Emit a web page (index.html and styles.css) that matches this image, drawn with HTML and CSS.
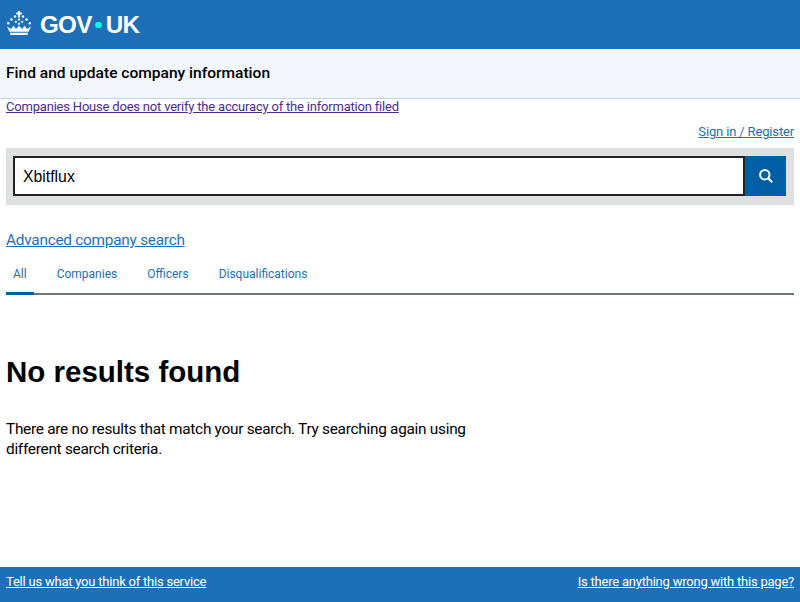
FILE: index.html
```html
<!DOCTYPE html>
<html lang="en">
<head>
<meta charset="utf-8">
<title>No results found - Find and update company information</title>
<link rel="stylesheet" href="styles.css">
</head>
<body>
<div class="page">
<header class="topbar">
  <svg class="crown" viewBox="0 0 26 24" aria-hidden="true">
    <g fill="#fff">
      <path d="M12 0h2v1.600h1.800v1.800H14v3h-2v-3h-1.800V1.600H12z"/>
      <circle cx="9" cy="5.500" r="1.200"/><circle cx="17" cy="5.500" r="1.200"/>
      <circle cx="5.500" cy="8.500" r="1.200"/><circle cx="20.500" cy="8.500" r="1.200"/>
      <circle cx="2.200" cy="12.200" r="1.200"/><circle cx="23.800" cy="12.200" r="1.200"/>
      <circle cx="13" cy="8.600" r="1.100"/><circle cx="9.800" cy="10.800" r="1.100"/><circle cx="16.200" cy="10.800" r="1.100"/>
      <circle cx="13" cy="12.800" r="1.100"/>
      <path d="M1 15.500 L5 18 L7.500 14.800 L10 18 L13 14.800 L16 18 L18.500 14.800 L21 18 L25 15.500 L22.500 20.800 H3.500 Z"/>
      <path d="M4 21.800h18l-.6 2.200H4.600z"/>
    </g>
  </svg>
  <span class="wordmark">GOV<span class="dot"></span>UK</span>
</header>
<div class="service"><span class="service-name">Find and update company information</span></div>
<main class="content">
  <a class="notice" href="#">Companies House does not verify the accuracy of the information filed</a>
  <div class="signin"><a class="link" href="#">Sign in / Register</a></div>
  <form class="search">
    <div class="search-box">Xbitflux</div>
    <div class="search-btn">
      <svg viewBox="0 0 14 14" class="mag" aria-hidden="true"><circle cx="5.800" cy="5.800" r="4.700" fill="none" stroke="#fff" stroke-width="2"/><path d="M9.200 9.200l4 4" stroke="#fff" stroke-width="2.200" fill="none"/></svg>
    </div>
  </form>
  <a class="link advanced" href="#">Advanced company search</a>
  <nav class="tabs">
    <a class="tab active" href="#">All</a>
    <a class="tab" href="#">Companies</a>
    <a class="tab" href="#">Officers</a>
    <a class="tab" href="#">Disqualifications</a>
  </nav>
  <h1 class="title">No results found</h1>
  <p class="message">There are no results that match your search. Try searching again using different search criteria.</p>
</main>
<footer class="footer">
  <a href="#">Tell us what you think of this service</a>
  <a href="#">Is there anything wrong with this page?</a>
</footer>
</div>
</body>
</html>
```
FILE: styles.css
```css
* { box-sizing: border-box; }
html, body { margin: 0; padding: 0; height: 100%; }
body { font-family: Roboto, "Liberation Sans", sans-serif; color: #000; background: #fff; overflow: hidden; }
.page { display: flex; flex-direction: column; height: 602px; }
.topbar { height: 49px; background: #1d70b8; display: flex; align-items: center; padding-left: 6px; flex: none; }
.crown { width: 26px; height: 24px; display: block; margin-bottom: 4px; }
.wordmark { font-family: "Liberation Sans", sans-serif; font-weight: 700; font-size: 24.200px; letter-spacing: -0.7px; color: #fff; margin-left: 8px; display: flex; align-items: center; }
.dot { width: 6.500px; height: 6.500px; border-radius: 50%; background: #00ffe0; margin: 1px 4px 0 3.500px; }
.service { height: 50px; background: #f3f7fb; border-bottom: 1px solid #bcd4e8; padding: 0 6px 2px; display: flex; align-items: center; flex: none; }
.service-name { font-size: 15.550px; font-weight: 500; }
.content { flex: 1; padding: 0 6px; display: flex; flex-direction: column; align-items: flex-start; }
.notice { font-size: 13px; letter-spacing: -0.2px; line-height: 15px; color: #4c2c92; }
.link { color: #1d70b8; }
.signin { align-self: stretch; text-align: right; font-size: 13px; letter-spacing: -0.15px; line-height: 17px; margin-top: 9px; }
.search { align-self: stretch; height: 57px; margin-top: 7.500px; background: #dee0e2; padding: 8.500px 8px 8px 7px; display: flex; }
.search-box { flex: 1; height: 40px; border: 2px solid #222; background: #fff; font-family: "Liberation Sans", sans-serif; font-size: 15.800px; line-height: 37px; padding-left: 8px; }
.search-btn { width: 41px; height: 40px; background: #005ea5; display: flex; align-items: center; justify-content: center; }
.mag { width: 14px; height: 14px; }
.advanced { font-size: 15.400px; letter-spacing: -0.26px; line-height: 20px; margin-top: 25.500px; }
.tabs { align-self: stretch; display: flex; gap: 16px; margin-top: 12px; height: 33px; border-bottom: 2px solid #6f777b; font-size: 12px; }
.tab { color: #1d70b8; text-decoration: none; padding: 5px 7px 0; line-height: 15px; height: 33px; }
.tab.active { border-bottom: 3px solid #005ea5; }
.title { font-family: "Liberation Sans", sans-serif; font-size: 29.500px; line-height: 36px; font-weight: 700; margin: 59px 0 0; }
.message { font-size: 15.400px; letter-spacing: -0.28px; line-height: 20.500px; margin: 28.500px 0 0; width: 475px; }
.footer { height: 35px; background: #1d70b8; display: flex; justify-content: space-between; align-items: center; padding: 0 6px 6px; font-size: 13px; letter-spacing: -0.22px; flex: none; }
.footer a { color: #fff; }
```
